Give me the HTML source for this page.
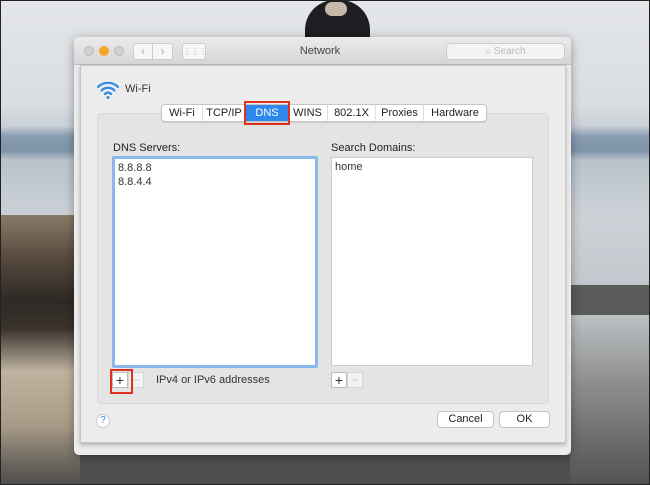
<!DOCTYPE html>
<html><head><style>
*{margin:0;padding:0;box-sizing:border-box}
body{width:650px;height:485px;overflow:hidden;position:relative;font-family:"Liberation Sans",sans-serif;background:#d8dde2}
.abs{position:absolute}
.bg{left:0;top:0;width:650px;height:485px;background:linear-gradient(180deg,#e4e6e9 0%,#d9dde1 22%,#c9d0d7 26%,#8b9eb3 28%,#7d92a8 31%,#b9c3cc 33%,#ccd2d7 45%,#c2c8cd 58%,#9a9a98 66%,#6e6e6e 80%,#545456 100%)}
.frame{left:0;top:0;width:650px;height:485px;border:1.5px solid #222}
</style></head><body>
<div class="abs bg"></div>
<!-- rocks left -->
<div class="abs" style="left:0;top:215px;width:80px;height:270px;background:linear-gradient(180deg,#8a7a68 0%,#5a4c40 15%,#2e2925 32%,#3a332c 42%,#bfb3a0 58%,#a89a86 78%,#6a665f 92%,#4f4d4b 100%)"></div>
<div class="abs" style="left:570px;top:285px;width:80px;height:30px;background:#5a5a58"></div>
<div class="abs" style="left:570px;top:315px;width:80px;height:170px;background:linear-gradient(180deg,#bcc1c4,#8e8e8e 40%,#525252 100%)"></div>
<div class="abs" style="left:80px;top:455px;width:490px;height:30px;background:#4e4e50"></div>
<!-- person -->
<div class="abs" style="left:305px;top:0;width:65px;height:37px;background:#1e1e22;border-radius:30px 30px 0 0"></div>
<div class="abs" style="left:325px;top:2px;width:22px;height:14px;background:#c9b9a8;border-radius:8px"></div>
<!-- window -->
<div class="abs" style="left:74px;top:37px;width:497px;height:418px;background:#ececec;border-radius:5px;box-shadow:0 2px 10px rgba(0,0,0,.35)"></div>
<div class="abs" style="left:74px;top:37px;width:497px;height:28px;background:linear-gradient(#ebebeb,#d6d6d6);border-radius:5px 5px 0 0;border-bottom:1px solid #bdbdbd"></div>
<div class="abs" style="left:84px;top:46px;width:10px;height:10px;border-radius:50%;background:#d0d0d0;border:1px solid #bbb"></div>
<div class="abs" style="left:99px;top:46px;width:10px;height:10px;border-radius:50%;background:#f5a623"></div>
<div class="abs" style="left:114px;top:46px;width:10px;height:10px;border-radius:50%;background:#d0d0d0;border:1px solid #bbb"></div>
<div class="abs" style="left:133px;top:43px;width:40px;height:17px;background:#f7f7f7;border:1px solid #ccc;border-radius:3px;font-size:12px;color:#aaa;display:flex"><span style="width:20px;text-align:center;border-right:1px solid #ccc">‹</span><span style="width:20px;text-align:center">›</span></div>
<div class="abs" style="left:182px;top:43px;width:24px;height:17px;background:#f7f7f7;border:1px solid #ccc;border-radius:3px;font-size:8px;color:#aaa;text-align:center;line-height:15px">⋮⋮⋮</div>
<div class="abs" style="left:290px;top:45px;width:60px;font-size:11px;color:#444;text-align:center">Network</div>
<div class="abs" style="left:446px;top:43px;width:119px;height:17px;background:#f4f4f4;border:1px solid #ccc;border-radius:4px;font-size:10px;color:#bbb;text-align:center;line-height:15px">⌕ Search</div>
<!-- sheet -->
<div class="abs" style="left:80px;top:65px;width:486px;height:378px;background:#ececec;border:1px solid #c8c8c8;box-shadow:0 2px 4px rgba(0,0,0,.25)"></div>
<svg class="abs" style="left:96px;top:80px" width="24" height="20" viewBox="0 0 24 20"><g fill="none" stroke="#2f8ae6" stroke-width="2.2" stroke-linecap="round"><path d="M2 7a14 14 0 0 1 20 0"/><path d="M5.5 10.5a9 9 0 0 1 13 0"/><path d="M9 14a4 4 0 0 1 6 0"/></g><circle cx="12" cy="17.5" r="1.5" fill="#2f8ae6"/></svg>
<div class="abs" style="left:125px;top:83px;font-size:11px;color:#333">Wi-Fi</div>
<!-- group -->
<div class="abs" style="left:97px;top:113px;width:452px;height:291px;background:#e4e4e4;border:1px solid #d8d8d8;border-radius:4px"></div>
<!-- tabs -->
<div class="abs" style="left:161px;top:104px;width:326px;height:18px;background:#fff;border:1px solid #c6c6c6;border-radius:4px;box-shadow:0 1px 1px rgba(0,0,0,.1);font-size:11px;color:#222;display:flex;line-height:16px">
<span style="width:41px;text-align:center;border-right:1px solid #ddd">Wi-Fi</span>
<span style="width:43px;text-align:center;border-right:1px solid #ddd">TCP/IP</span>
<span style="width:42px;text-align:center;background:#2e87ea;color:#fff">DNS</span>
<span style="width:40px;text-align:center;border-right:1px solid #ddd">WINS</span>
<span style="width:48px;text-align:center;border-right:1px solid #ddd">802.1X</span>
<span style="width:48px;text-align:center;border-right:1px solid #ddd">Proxies</span>
<span style="flex:1;text-align:center">Hardware</span></div>
<div class="abs" style="left:244px;top:101px;width:46px;height:24px;border:2.5px solid #e0301e"></div>
<div class="abs" style="left:113px;top:142px;font-size:11px;color:#222">DNS Servers:</div>
<div class="abs" style="left:331px;top:142px;font-size:11px;color:#222">Search Domains:</div>
<div class="abs" style="left:112px;top:156px;width:206px;height:212px;background:#fff;border:3px solid #8ab8ec;border-radius:2px;font-size:11px;color:#333;padding:2px 3px;line-height:14px">8.8.8.8<br>8.8.4.4</div>
<div class="abs" style="left:331px;top:157px;width:202px;height:209px;background:#fff;border:1px solid #ccc;font-size:11px;color:#333;padding:2px 3px;line-height:14px">home</div>
<div class="abs" style="left:112px;top:372px;width:16px;height:16px;background:#fff;border:1px solid #bbb;font-size:14px;text-align:center;line-height:14px;color:#333">+</div>
<div class="abs" style="left:128px;top:372px;width:16px;height:16px;background:#f2f2f2;border:1px solid #d6d6d6;font-size:12px;text-align:center;line-height:14px;color:#ccc">−</div>
<div class="abs" style="left:110px;top:369px;width:23px;height:25px;border:2.5px solid #e0301e"></div>
<div class="abs" style="left:156px;top:374px;font-size:11px;color:#333">IPv4 or IPv6 addresses</div>
<div class="abs" style="left:331px;top:372px;width:16px;height:16px;background:#fff;border:1px solid #bbb;font-size:14px;text-align:center;line-height:14px;color:#333">+</div>
<div class="abs" style="left:347px;top:372px;width:16px;height:16px;background:#f2f2f2;border:1px solid #d6d6d6;font-size:12px;text-align:center;line-height:14px;color:#ccc">−</div>
<div class="abs" style="left:96px;top:414px;width:14px;height:14px;border-radius:50%;background:#fff;border:1px solid #ccc;font-size:10px;color:#2f8ae6;text-align:center;line-height:12px">?</div>
<div class="abs" style="left:437px;top:411px;width:57px;height:17px;background:#fff;border:1px solid #c4c4c4;border-radius:4px;font-size:11px;text-align:center;line-height:15px;color:#222">Cancel</div>
<div class="abs" style="left:499px;top:411px;width:51px;height:17px;background:#fff;border:1px solid #c4c4c4;border-radius:4px;font-size:11px;text-align:center;line-height:15px;color:#222">OK</div>
<div class="abs frame"></div>
</body></html>
